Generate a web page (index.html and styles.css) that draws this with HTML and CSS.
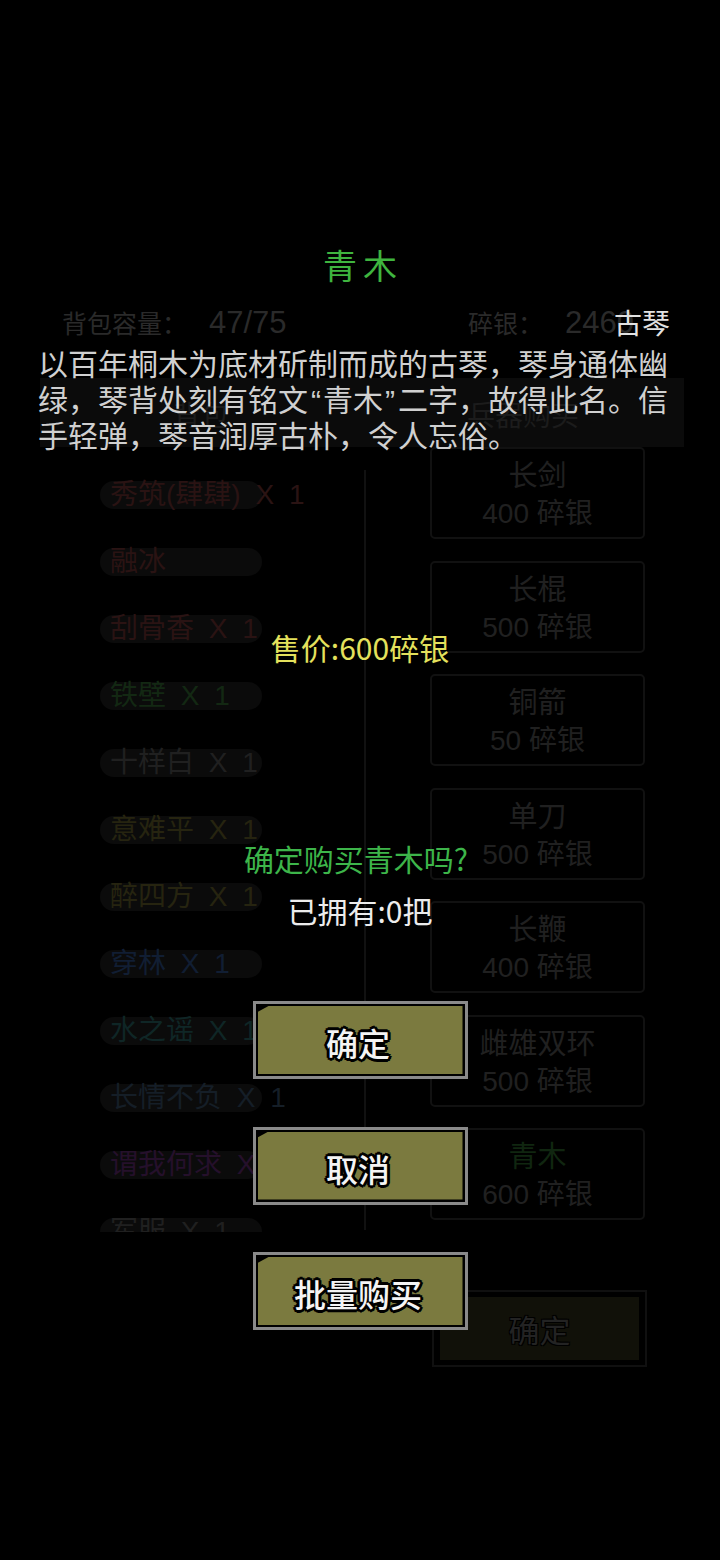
FILE: index.html
```html
<!DOCTYPE html>
<html lang="zh-CN">
<head>
<meta charset="utf-8">
<title>青木</title>
<link rel="stylesheet" href="styles.css">
</head>
<body>
<div class="screen">
  <div class="game">
    <div class="stats">
      <div class="stat stat-bag"><span class="stat-label">背包容量：</span><span class="stat-val">47/75</span></div>
      <div class="stat stat-silver"><span class="stat-label">碎银：</span><span class="stat-val">2460</span></div>
    </div>
    <div class="tabs">
      <div class="tab">背包</div>
      <div class="tab">兵器购买</div>
    </div>
    <div class="content">
      <div class="bag-list">
        <div class="bag-item c-red">秀筑(肆肆) X 1</div>
        <div class="bag-item c-red">融冰</div>
        <div class="bag-item c-red">刮骨香 X 1</div>
        <div class="bag-item c-green">铁壁 X 1</div>
        <div class="bag-item c-grey">十样白 X 1</div>
        <div class="bag-item c-olive">意难平 X 1</div>
        <div class="bag-item c-olive">醉四方 X 1</div>
        <div class="bag-item c-blue">穿林 X 1</div>
        <div class="bag-item c-teal">水之谣 X 1</div>
        <div class="bag-item c-slate">长情不负 X 1</div>
        <div class="bag-item c-purple">谓我何求 X 1</div>
        <div class="bag-item c-grey">军服 X 1</div>
      </div>
      <div class="divider"></div>
      <div class="shop">
        <div class="card"><div class="card-name">长剑</div><div class="card-price">400 碎银</div></div>
        <div class="card"><div class="card-name">长棍</div><div class="card-price">500 碎银</div></div>
        <div class="card"><div class="card-name">铜箭</div><div class="card-price">50 碎银</div></div>
        <div class="card"><div class="card-name">单刀</div><div class="card-price">500 碎银</div></div>
        <div class="card"><div class="card-name">长鞭</div><div class="card-price">400 碎银</div></div>
        <div class="card"><div class="card-name">雌雄双环</div><div class="card-price">500 碎银</div></div>
        <div class="card"><div class="card-name card-name-green">青木</div><div class="card-price">600 碎银</div></div>
      </div>
    </div>
    <div class="shop-confirm"><div class="shop-confirm-face">确定</div></div>
  </div>

  <div class="dialog">
    <div class="dialog-title">青木</div>
    <div class="dialog-type">古琴</div>
    <div class="dialog-desc">
      <span class="desc-line">以百年桐木为底材斫制而成的古琴，琴身通体幽</span>
      <span class="desc-line">绿，琴背处刻有铭文<span class="q q-open">“</span>青木<span class="q q-close">”</span>二字，故得此名。信</span>
      <span class="desc-line">手轻弹，琴音润厚古朴，令人忘俗。</span>
    </div>
    <div class="dialog-price">售价:600碎银</div>
    <div class="dialog-ask">确定购买青木吗?</div>
    <div class="dialog-owned">已拥有:0把</div>
    <div class="dialog-actions">
      <div class="btn"><div class="btn-face">确定</div></div>
      <div class="btn"><div class="btn-face">取消</div></div>
      <div class="btn"><div class="btn-face">批量购买</div></div>
    </div>
  </div>
</div>
</body>
</html>
```
FILE: styles.css
```css
html, body {
  margin: 0;
  padding: 0;
  background: #000;
}
body {
  width: 720px;
  height: 1560px;
  overflow: hidden;
  font-family: "Noto Sans CJK SC", "Noto Sans", sans-serif;
}
.screen {
  position: relative;
  width: 720px;
  height: 1560px;
  background: #000;
}

/* ---------- dimmed game background ---------- */
.game {
  padding-top: 306px;
}
.stats {
  display: flex;
  height: 32px;
  line-height: 32px;
  font-size: 25px;
  color: #2a2a2a;
}
.stat {
  display: flex;
  align-items: baseline;
  white-space: nowrap;
}
.stat-bag {
  margin-left: 62px;
  width: 406px;
}
.stat-label {
  margin-right: 22px;
}
.stat-val {
  font-family: "Liberation Sans", "Noto Sans CJK SC", sans-serif;
  font-size: 31px;
}
.tabs {
  display: flex;
  margin: 40px 36px 0 40px;
  height: 69px;
  background: #0b0b0b;
}
.tab {
  flex: 1;
  text-align: center;
  padding-top: 18px;
  line-height: 36px;
  font-size: 28px;
  color: #1c1c1c;
}
.content {
  display: flex;
  align-items: flex-start;
  height: 785px;
}
.bag-list {
  box-sizing: border-box;
  width: 364px;
  height: 785px;
  padding: 34px 0 0 100px;
  overflow: hidden;
}
.bag-item {
  width: 152px;
  height: 28px;
  padding-left: 10px;
  margin-bottom: 39px;
  border-radius: 14px;
  background: #0b0b0b;
  font-family: "Liberation Sans", "Noto Sans CJK SC", sans-serif;
  font-size: 28px;
  line-height: 28px;
  word-spacing: 7px;
  white-space: nowrap;
}
.c-red { color: #2a1313; }
.c-green { color: #132813; }
.c-grey { color: #202020; }
.c-olive { color: #262410; }
.c-blue { color: #111e33; }
.c-teal { color: #0f2626; }
.c-slate { color: #151e27; }
.c-purple { color: #25102b; }

.divider {
  width: 2px;
  height: 760px;
  margin-top: 23px;
  background: #111;
}
.shop {
  display: flex;
  flex-direction: column;
  gap: 21.5px;
  width: 215px;
  margin-left: 64px;
}
.card {
  box-sizing: border-box;
  height: 92px;
  padding-top: 8px;
  border: 2px solid #111;
  border-radius: 5px;
  text-align: center;
  font-family: "Liberation Sans", "Noto Sans CJK SC", sans-serif;
  font-size: 28px;
  line-height: 38px;
  color: #202020;
}
.card-name {
  font-size: 29px;
}
.card-name-green {
  color: #102610;
}
.shop-confirm {
  box-sizing: border-box;
  width: 215px;
  height: 77px;
  margin: 58px 0 0 432px;
  padding: 5px 6px;
  border: 2px solid #101010;
}
.shop-confirm-face {
  height: 100%;
  background: #111109;
  display: flex;
  align-items: center;
  justify-content: center;
  font-size: 31px;
  color: #232323;
  text-shadow: 1px 1px 0 #000, -1px -1px 0 #000, 1px -1px 0 #000, -1px 1px 0 #000;
}

/* ---------- dialog overlay ---------- */
.dialog {
  position: absolute;
  top: 0;
  left: 0;
  width: 720px;
  height: 1560px;
  padding-top: 245px;
  box-sizing: border-box;
}
.dialog-title {
  text-align: center;
  font-size: 34px;
  line-height: 40px;
  letter-spacing: 6px;
  padding-left: 6px;
  color: #3fb43f;
}
.dialog-type {
  margin-top: 20px;
  padding-right: 50px;
  text-align: right;
  font-size: 28px;
  line-height: 34px;
  color: #e2e2e2;
}
.dialog-desc {
  margin: 5px 0 0 38px;
  font-size: 30px;
  line-height: 36px;
  color: #d0d0d0;
}
.desc-line {
  display: block;
  height: 36px;
  white-space: nowrap;
}
.q {
  font-family: "Liberation Sans", sans-serif;
  line-height: 1;
}
.q-open {
  padding-left: 3px;
  padding-right: 2px;
}
.q-close {
  padding-left: 2px;
  padding-right: 3px;
}
.dialog-price,
.dialog-ask,
.dialog-owned {
  text-align: center;
  font-size: 30px;
  line-height: 34px;
}
.dialog-price {
  margin-top: 178px;
  color: #e4e15c;
}
.dialog-ask {
  margin-top: 177px;
  padding-right: 8px;
  color: #3db54a;
}
.dialog-owned {
  margin-top: 18px;
  color: #ececec;
}
.dialog-actions {
  display: flex;
  flex-direction: column;
  align-items: center;
  gap: 47.5px;
  margin-top: 74px;
}
.btn {
  box-sizing: border-box;
  width: 215px;
  height: 78px;
  padding: 2px;
  border: 3px solid #8a8a8a;
  background: #000;
}
.btn-face {
  height: 100%;
  background: #7b7a3f;
  clip-path: polygon(11px 0, 100% 0, 100% 100%, 0 100%, 0 6px);
  display: flex;
  align-items: center;
  justify-content: center;
  padding: 4px 4px 0 0;
  box-sizing: border-box;
  font-size: 32px;
  font-weight: 500;
  color: #f4f4f4;
  text-shadow:
    2px 0 0 #000, -2px 0 0 #000, 0 2px 0 #000, 0 -2px 0 #000,
    2px 2px 0 #000, -2px -2px 0 #000, 2px -2px 0 #000, -2px 2px 0 #000,
    3px 0 0 #000, -3px 0 0 #000, 0 3px 0 #000, 0 -3px 0 #000;
}
```
